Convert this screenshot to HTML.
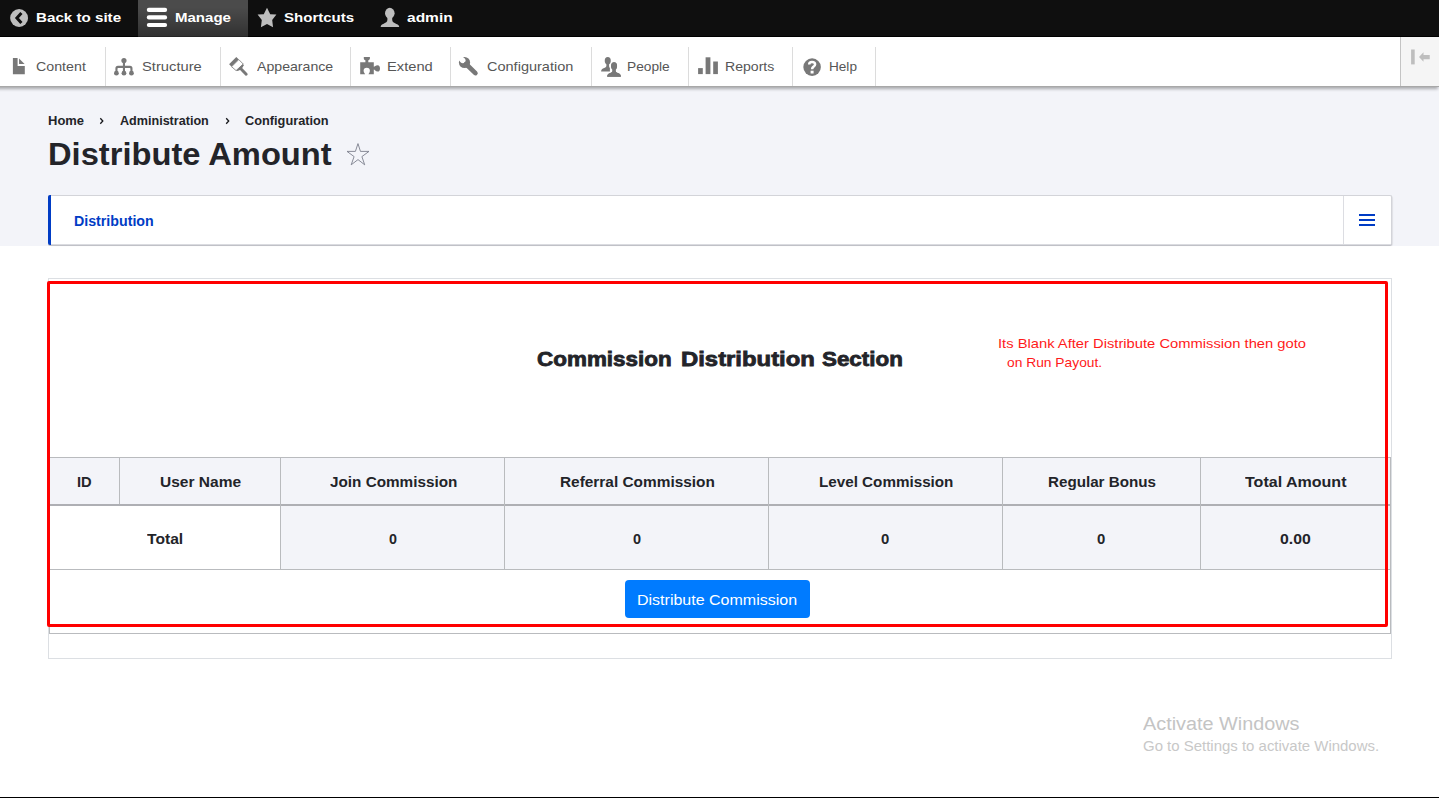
<!DOCTYPE html>
<html lang="en">
<head>
<meta charset="utf-8">
<title>Distribute Amount</title>
<style>
*{box-sizing:border-box;margin:0;padding:0}
html,body{width:1439px;height:798px;overflow:hidden;background:#fff}
body{font-family:"Liberation Sans",sans-serif;position:relative;color:#232429}
.a{position:absolute}
.t{position:absolute;white-space:nowrap;line-height:1;transform-origin:0 50%;display:block}
svg{position:absolute;overflow:visible}
#hdr{left:0;top:0;width:1439px;height:246px;background:#f3f4f9}
#bar{left:0;top:0;width:1439px;height:37px;background:#0f0f0f;border-bottom:1px solid #000}
#manage{left:138px;top:0;width:110px;height:37px;background:linear-gradient(rgba(255,255,255,.25) 20%,rgba(255,255,255,0) 200%)}
#tray{left:0;top:37px;width:1439px;height:50px;background:#fff;border-bottom:1px solid #a8a8a8;box-shadow:-2px 1px 3px 1px rgba(0,0,0,.31)}
.dv{position:absolute;top:47px;height:39px;width:1px;background:#dcdcdc}
#orient{left:1400px;top:37px;width:39px;height:49px;background:#f5f5f5;border-left:1px solid #c4c4c4}
#tabs{left:48px;top:195px;width:1344px;height:50px;background:#fff;border:1px solid #d3d4d9;border-bottom-color:#dadbe0;border-radius:2px;box-shadow:0 1px 0 #c0c1c7,1px 1px 1px rgba(0,0,0,.08)}
#tabblue{left:48px;top:195px;width:3px;height:50px;background:#003cc5;border-radius:2px 0 0 2px}
#tabdiv{left:1343px;top:196px;width:1px;height:48px;background:#dcdde2}
#card{left:48px;top:278px;width:1344px;height:381px;border:1px solid #dcdfe3;background:#fff}
#tbl{left:49px;top:457px;width:1342px;height:177px;border:1px solid #b9bbbe;background:#fff}
.c{position:absolute;background:#f3f4f9}
.vl{position:absolute;width:1px;background:#b9bbbe}
.hl{position:absolute;height:1px;background:#b9bbbe}
#red{left:47px;top:281px;width:1341px;height:346px;border:3px solid #ff0000;border-radius:2px}
#btn{left:625px;top:580px;width:185px;height:38px;background:#007bff;border-radius:4px}
#bot{left:0;top:797px;width:1439px;height:1px;background:#000}
</style>
</head>
<body>
<div id="hdr" class="a"></div>
<div id="tray" class="a"></div>
<div id="bar" class="a"></div>
<div id="manage" class="a"></div>
<div id="orient" class="a"></div>
<div class="dv" style="left:105px"></div>
<div class="dv" style="left:220px"></div>
<div class="dv" style="left:350px"></div>
<div class="dv" style="left:450px"></div>
<div class="dv" style="left:591px"></div>
<div class="dv" style="left:688px"></div>
<div class="dv" style="left:792px"></div>
<div class="dv" style="left:875px"></div>
<div id="tabs" class="a"></div>
<div id="tabblue" class="a"></div>
<div id="tabdiv" class="a"></div>
<div id="card" class="a"></div>
<div id="tbl" class="a"></div>
<!-- header row bg 458..504, data row 506..569 -->
<div class="c" style="left:50px;top:458px;width:1340px;height:46px"></div>
<div class="c" style="left:281px;top:506px;width:1109px;height:63px"></div>
<div class="hl" style="left:50px;top:504px;width:1340px;height:2px;background:#aeafb4"></div>
<div class="hl" style="left:50px;top:569px;width:1340px"></div>
<div class="vl" style="left:119px;top:458px;height:46px"></div>
<div class="vl" style="left:280px;top:458px;height:111px"></div>
<div class="vl" style="left:504px;top:458px;height:111px"></div>
<div class="vl" style="left:768px;top:458px;height:111px"></div>
<div class="vl" style="left:1002px;top:458px;height:111px"></div>
<div class="vl" style="left:1200px;top:458px;height:111px"></div>
<div id="btn" class="a"></div>
<div id="red" class="a"></div>
<div id="bot" class="a"></div>
<svg class="a" style="left:0;top:0" width="1439" height="798" viewBox="0 0 1439 798">
<!-- back circle -->
<circle cx="19.1" cy="18" r="8.95" fill="#bebebe"/>
<polyline points="21.4,12.9 16.9,17.95 21.4,23" fill="none" stroke="#0f0f0f" stroke-width="3"/>
<!-- hamburger -->
<rect x="146.8" y="7.8" width="20.3" height="4.1" rx="2" fill="#fff"/>
<rect x="146.8" y="15.35" width="20.3" height="4.1" rx="2" fill="#fff"/>
<rect x="146.8" y="22.9" width="20.3" height="4.1" rx="2" fill="#fff"/>
<!-- star -->
<polygon points="267,7.7 270.2,14.3 276.4,14.5 272.2,20.1 273.05,27.2 267,24 260.9,27.2 261.8,20.1 257.6,14.5 263.75,14.3" fill="#bebebe"/>
<!-- user -->
<ellipse cx="389.8" cy="13.2" rx="4.8" ry="5.4" fill="#bebebe"/>
<path d="M380.7,27.1 C380.7,25.2 381.3,24.6 383.2,23.9 C385.8,22.9 387.4,22 387.4,19.8 L387.4,16 L392.2,16 L392.2,19.8 C392.2,22 393.8,22.9 396.4,23.9 C398.3,24.6 399.2,25.2 399.2,27.1 Z" fill="#bebebe"/>
<g fill="#787878">
<!-- content -->
<path d="M12.9,58.1 H17.6 V66 H24.8 V74.3 H12.9 Z"/>
<path d="M19.05,58.6 L24.6,64.1 H19.05 Z"/>
<!-- structure -->
<circle cx="123.95" cy="60.6" r="2.6"/>
<circle cx="116.4" cy="73.2" r="2.4"/>
<circle cx="123.95" cy="73.2" r="2.4"/>
<circle cx="131.45" cy="73.2" r="2.4"/>
<path d="M123.95,60.6 V73 M116.45,73 V68.4 Q116.45,66.9 117.95,66.9 H129.95 Q131.45,66.9 131.45,68.4 V73" fill="none" stroke="#787878" stroke-width="2.1"/>
<!-- appearance -->
<polygon points="236.3,57.1 238.8,59.6 231.6,66.7 229.1,64.3"/>
<polygon points="238.8,59.6 243.2,64 236.1,70.6 231.6,66.7" fill="#fff" stroke="#787878" stroke-width="0.8"/>
<polygon points="243.2,64 243.7,65.6 242.2,68 240,70.1 237.6,71 236.1,70.6"/>
<line x1="240.6" y1="68.4" x2="246.2" y2="74.2" stroke="#787878" stroke-width="2.9" stroke-linecap="round"/>
<!-- extend -->
<path d="M360.2,62.2 H365.4 V60.2 C364.3,60 363.8,59.4 363.8,58.3 V57.1 H369.9 V58.3 C369.9,59.4 369.4,60 368.3,60.2 V62.2 H373.8 V66.8 C374.7,66.8 375.6,65.2 377.6,65.2 C379.3,65.2 380,66.8 380,68.4 C380,70 379.3,71.6 377.6,71.6 C375.6,71.6 374.7,69.5 373.8,69.5 V74.3 H368.5 C368.5,73.6 369.9,72.8 369.9,70.8 A3.15,3.15 0 0 0 363.6,70.8 C363.6,72.8 365.1,73.6 365.1,74.3 H360.2 Z"/>
<!-- configuration -->
<circle cx="464.5" cy="62.5" r="5.6"/>
<circle cx="462.9" cy="60.6" r="2.7" fill="#fff"/>
<line x1="462.9" y1="60.6" x2="456.9" y2="54.6" stroke="#fff" stroke-width="5.2"/>
<line x1="466" y1="64" x2="475.4" y2="73.1" stroke="#787878" stroke-width="4.7" stroke-linecap="round"/>
<!-- people back -->
<ellipse cx="607.75" cy="60.8" rx="3" ry="3.7"/>
<path d="M601.1,71.6 C601.1,69.4 602.3,68.6 604.2,68 C605.9,67.4 606.4,66.8 606.4,65.6 L606.4,63 L609.1,63 L609.1,65.6 C609.1,66.8 609.3,67.4 609.9,67.9 L609.9,71.6 Z"/>
<!-- people front -->
<g stroke="#fff" stroke-width="1.6" paint-order="stroke">
<ellipse cx="614.05" cy="66.05" rx="3" ry="3.9"/>
<path d="M607.2,76.7 C607.2,74.4 608.4,73.6 610.3,73 C612,72.4 612.5,71.8 612.5,70.6 L612.5,68 L615.6,68 L615.6,70.6 C615.6,71.8 616.1,72.4 617.8,73 C619.7,73.6 620.9,74.4 620.9,76.7 Z"/>
</g>
<ellipse cx="614.05" cy="66.05" rx="3" ry="3.9"/>
<path d="M607.2,76.7 C607.2,74.4 608.4,73.6 610.3,73 C612,72.4 612.5,71.8 612.5,70.6 L612.5,68 L615.6,68 L615.6,70.6 C615.6,71.8 616.1,72.4 617.8,73 C619.7,73.6 620.9,74.4 620.9,76.7 Z"/>
<!-- reports -->
<rect x="698.1" y="68.1" width="4.7" height="6"/>
<rect x="705.6" y="57.3" width="4.8" height="16.8"/>
<rect x="713.2" y="61.5" width="4.7" height="12.6"/>
<!-- help -->
<circle cx="812.1" cy="67.1" r="8.8"/>
</g>
<path d="M809.2,64.4 C809.2,62.8 810.3,61.9 812,61.9 C813.8,61.9 815.1,62.8 815.1,64.2 C815.1,65.4 814.3,66 813.4,66.8 C812.5,67.6 812.1,68.2 812.1,69.3" fill="none" stroke="#fff" stroke-width="2.5"/>
<rect x="810.6" y="70.7" width="3" height="2.8" fill="#fff"/>
<!-- orientation toggle -->
<rect x="1411.1" y="49.5" width="3.6" height="14.9" fill="#bebebe"/>
<path d="M1419,57.05 L1423.5,52.2 L1423.5,54.9 L1429.75,54.9 L1429.75,59.2 L1423.5,59.2 L1423.5,61.8 Z" fill="#bebebe"/>
<!-- title star -->
<polygon points="357.98,143.6 360.45,151.4 369,151.4 361.9,156.6 364.7,164.8 358,159.6 351.2,164.8 354.1,156.6 347,151.4 355.4,151.4" fill="none" stroke="#7c7f8c" stroke-width="0.9" stroke-linejoin="miter"/>
<!-- breadcrumb chevrons -->
<polyline points="100.3,118.3 102.8,121 100.3,123.7" fill="none" stroke="#16171b" stroke-width="1.3"/>
<polyline points="226.2,118.3 228.7,121 226.2,123.7" fill="none" stroke="#16171b" stroke-width="1.3"/>
<!-- tabs hamburger -->
<rect x="1359" y="214" width="16" height="2" fill="#003cc5"/>
<rect x="1359" y="219" width="16" height="2" fill="#003cc5"/>
<rect x="1359" y="224" width="16" height="2" fill="#003cc5"/>
</svg>

<span class="t" style="left:36.10px;top:11.00px;font-size:13.4px;font-weight:bold;color:#fff;transform:scaleX(1.1320);">Back to site</span>
<span class="t" style="left:174.70px;top:11.00px;font-size:13.4px;font-weight:bold;color:#fff;transform:scaleX(1.1220);">Manage</span>
<span class="t" style="left:284.20px;top:11.00px;font-size:13.4px;font-weight:bold;color:#fff;transform:scaleX(1.1226);">Shortcuts</span>
<span class="t" style="left:407.30px;top:11.00px;font-size:13.4px;font-weight:bold;color:#fff;transform:scaleX(1.1590);">admin</span>
<span class="t" style="left:36.30px;top:60.00px;font-size:13.4px;font-weight:normal;color:#565656;transform:scaleX(1.0625);">Content</span>
<span class="t" style="left:141.70px;top:60.00px;font-size:13.4px;font-weight:normal;color:#565656;transform:scaleX(1.1000);">Structure</span>
<span class="t" style="left:257.00px;top:60.00px;font-size:13.4px;font-weight:normal;color:#565656;transform:scaleX(1.0556);">Appearance</span>
<span class="t" style="left:386.70px;top:60.00px;font-size:13.4px;font-weight:normal;color:#565656;transform:scaleX(1.0975);">Extend</span>
<span class="t" style="left:487.00px;top:60.00px;font-size:13.4px;font-weight:normal;color:#565656;transform:scaleX(1.0838);">Configuration</span>
<span class="t" style="left:627.28px;top:60.00px;font-size:13.4px;font-weight:normal;color:#565656;transform:scaleX(1.0244);">People</span>
<span class="t" style="left:724.95px;top:60.00px;font-size:13.4px;font-weight:normal;color:#565656;transform:scaleX(1.0522);">Reports</span>
<span class="t" style="left:828.99px;top:60.00px;font-size:13.4px;font-weight:normal;color:#565656;transform:scaleX(1.0148);">Help</span>
<span class="t" style="left:48.30px;top:115.00px;font-size:12.3px;font-weight:bold;color:#232429;transform:scaleX(1.0559);">Home</span>
<span class="t" style="left:120.30px;top:115.00px;font-size:12.3px;font-weight:bold;color:#232429;transform:scaleX(1.0230);">Administration</span>
<span class="t" style="left:245.30px;top:115.00px;font-size:12.3px;font-weight:bold;color:#232429;transform:scaleX(1.0375);">Configuration</span>
<span class="t" style="left:48.43px;top:139.00px;font-size:31.5px;font-weight:bold;color:#232429;transform:scaleX(1.0368);">Distribute Amount</span>
<span class="t" style="left:74.00px;top:214.80px;font-size:13.8px;font-weight:bold;color:#003cc5;transform:scaleX(1.0299);">Distribution</span>
<span class="t" style="left:537.20px;top:349.40px;font-size:20.4px;font-weight:bold;color:#232429;transform:scaleX(1.1008);-webkit-text-stroke:0.8px #232429;">Commission</span>
<span class="t" style="left:680.70px;top:349.40px;font-size:20.4px;font-weight:bold;color:#232429;transform:scaleX(1.1702);-webkit-text-stroke:0.8px #232429;">Distribution</span>
<span class="t" style="left:822.40px;top:349.40px;font-size:20.4px;font-weight:bold;color:#232429;transform:scaleX(1.0973);-webkit-text-stroke:0.8px #232429;">Section</span>
<span class="t" style="left:997.57px;top:336.90px;font-size:13px;font-weight:normal;color:#ff1a1a;transform:scaleX(1.1339);">Its Blank After Distribute Commission then goto</span>
<span class="t" style="left:1007.20px;top:355.70px;font-size:13px;font-weight:normal;color:#ff1a1a;transform:scaleX(1.0618);">on Run Payout.</span>
<span class="t" style="left:76.90px;top:475.00px;font-size:14.7px;font-weight:bold;color:#232429;transform:scaleX(1.0000);">ID</span>
<span class="t" style="left:159.80px;top:475.00px;font-size:14.7px;font-weight:bold;color:#232429;transform:scaleX(1.0571);">User Name</span>
<span class="t" style="left:329.50px;top:475.00px;font-size:14.7px;font-weight:bold;color:#232429;transform:scaleX(1.0402);">Join Commission</span>
<span class="t" style="left:559.60px;top:475.00px;font-size:14.7px;font-weight:bold;color:#232429;transform:scaleX(1.0483);">Referral Commission</span>
<span class="t" style="left:818.70px;top:475.00px;font-size:14.7px;font-weight:bold;color:#232429;transform:scaleX(1.0357);">Level Commission</span>
<span class="t" style="left:1048.20px;top:475.00px;font-size:14.7px;font-weight:bold;color:#232429;transform:scaleX(1.0337);">Regular Bonus</span>
<span class="t" style="left:1245.20px;top:475.00px;font-size:14.7px;font-weight:bold;color:#232429;transform:scaleX(1.0914);">Total Amount</span>
<span class="t" style="left:147.10px;top:531.50px;font-size:14.7px;font-weight:bold;color:#232429;transform:scaleX(1.0647);">Total</span>
<span class="t" style="left:389.00px;top:531.50px;font-size:14.7px;font-weight:bold;color:#232429;transform:scaleX(0.9750);">0</span>
<span class="t" style="left:632.60px;top:531.50px;font-size:14.7px;font-weight:bold;color:#232429;transform:scaleX(0.9875);">0</span>
<span class="t" style="left:881.30px;top:531.50px;font-size:14.7px;font-weight:bold;color:#232429;transform:scaleX(1.0125);">0</span>
<span class="t" style="left:1097.30px;top:531.50px;font-size:14.7px;font-weight:bold;color:#232429;transform:scaleX(1.0125);">0</span>
<span class="t" style="left:1279.80px;top:531.50px;font-size:14.7px;font-weight:bold;color:#232429;transform:scaleX(1.0759);">0.00</span>
<span class="t" style="left:637.27px;top:591.90px;font-size:15.5px;font-weight:normal;color:#fff;transform:scaleX(1.0325);">Distribute Commission</span>
<span class="t" style="left:1142.60px;top:714.00px;font-size:19.2px;font-weight:normal;color:#c4c4c4;transform:scaleX(1.0331);">Activate Windows</span>
<span class="t" style="left:1142.60px;top:739.00px;font-size:14.5px;font-weight:normal;color:#c8c8c8;transform:scaleX(1.0316);">Go to Settings to activate Windows.</span>
</body>
</html>
